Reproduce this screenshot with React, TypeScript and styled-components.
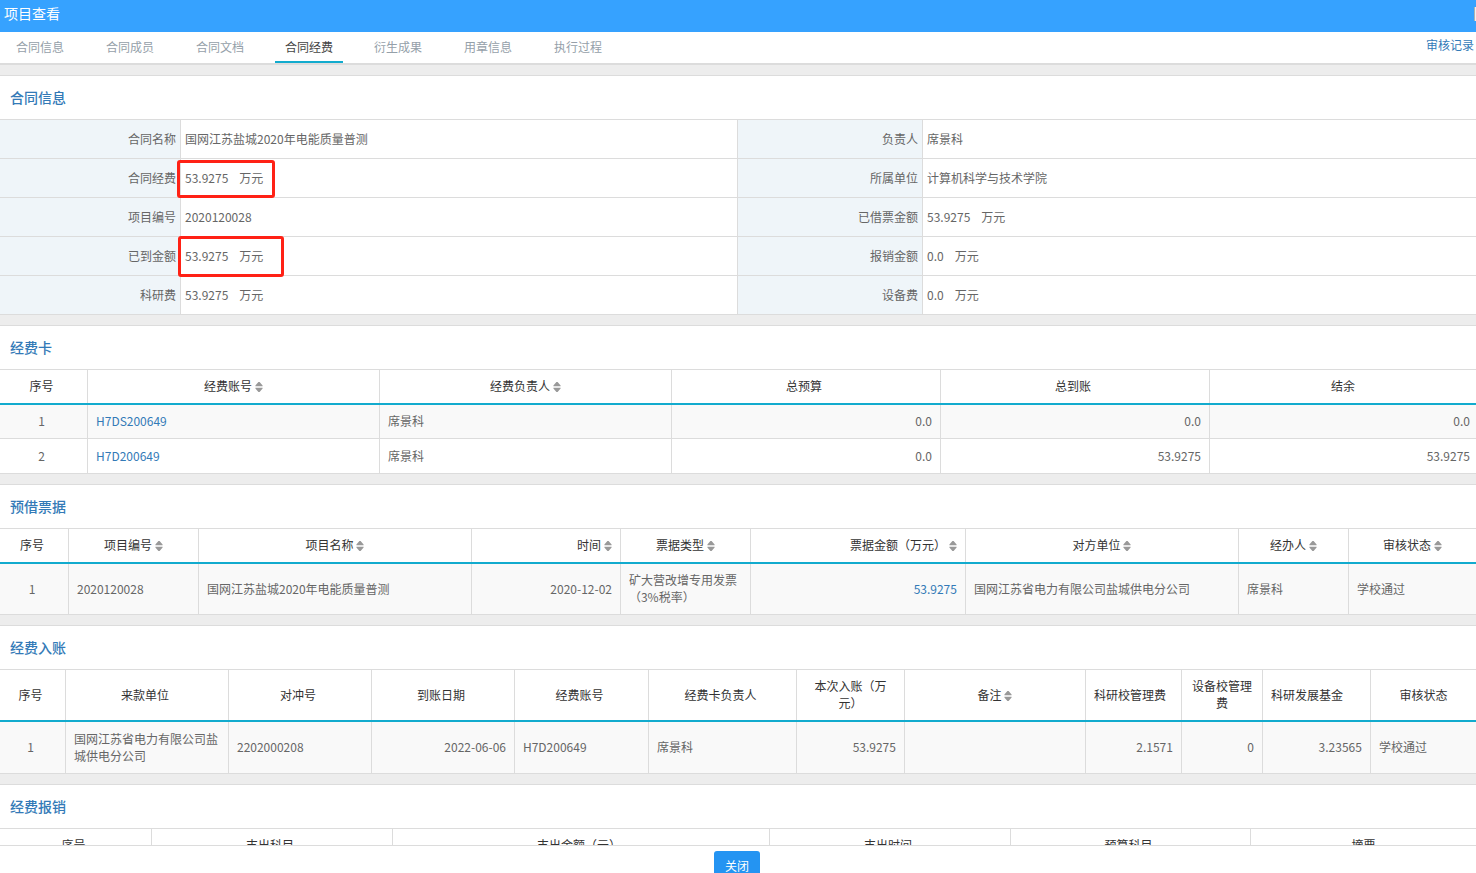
import React from "react";
import styled, { createGlobalStyle, css } from "styled-components";

const LINE = "#dcdcdc";
const LINK = "#337ab7";
const TEAL = "#12abce";

const GlobalStyle = createGlobalStyle`
  * { box-sizing: border-box; }
  body {
    margin: 0;
    background: #fff;
    color: #666;
    font-family: "Noto Sans CJK SC", "Noto Sans", sans-serif;
    font-size: 12px;
    line-height: 17px;
  }
  a { color: ${LINK}; text-decoration: none; }
`;

const Page = styled.div`
  display: flex;
  flex-direction: column;
  height: 100vh;
  overflow: hidden;
`;

const TitleBar = styled.header`
  flex: none;
  display: flex;
  justify-content: space-between;
  align-items: flex-start;
  height: 32px;
  padding: 3px 0 0 4px;
  background: #36a2ff;
  color: #fff;
  overflow: hidden;
`;

const PageTitle = styled.h1`
  margin: 0;
  font-size: 14px;
  font-weight: 400;
  line-height: 20px;
`;

const EdgeButton = styled.button`
  width: 2px;
  height: 14px;
  margin-top: 4px;
  padding: 0;
  border: 0;
  border-left: 1px solid #b0b0b0;
  background: #f0f0f0;
`;

const TabBar = styled.nav`
  flex: none;
  display: flex;
  justify-content: space-between;
  height: 33px;
  border-bottom: 2px solid ${LINE};
  padding: 0 2px 0 6px;
`;

const TabList = styled.div`
  display: flex;
  gap: 22px;
`;

const Tab = styled.a<{ $active?: boolean }>`
  height: 31px;
  padding: 6px 10px 0;
  && { color: #95a0a9; }
  ${(p) =>
    p.$active &&
    css`
      margin: 0 -1px;
      border-bottom: 2px solid ${TEAL};
      && { color: #444; }
    `}
`;

const RecordLink = styled.a`
  padding-top: 4px;
`;

const Content = styled.main`
  flex: 1;
  min-height: 0;
  display: flex;
  flex-direction: column;
  gap: 10px;
  padding-top: 10px;
  background: #ededed;
  overflow: hidden;
`;

const Panel = styled.section`
  flex: none;
  border-top: 1px solid ${LINE};
  background: #fff;
`;

const PanelTitle = styled.h2`
  height: 43px;
  margin: 0;
  padding: 0 10px;
  color: ${LINK};
  font-size: 14px;
  font-weight: 500;
  line-height: 43px;
`;

const Table = styled.table`
  width: 100%;
  table-layout: fixed;
  border-collapse: separate;
  border-spacing: 0;
  border-top: 1px solid ${LINE};
`;

const Col = styled.col<{ $share: number }>`
  width: ${(p) => p.$share}%;
`;

const InfoLabel = styled.th`
  height: 39px;
  padding: 0 4px 2px;
  border-right: 1px solid ${LINE};
  border-bottom: 1px solid ${LINE};
  background: #eff5f9;
  font-weight: 400;
  text-align: right;
`;

const InfoValue = styled.td`
  position: relative;
  padding: 0 4px 2px;
  border-bottom: 1px solid ${LINE};
  &:not(:last-child) { border-right: 1px solid ${LINE}; }
`;

const Unit = styled.span`
  margin-left: 11px;
`;

const Mark = styled.span<{ $left: number; $top: number; $width: number; $height: number }>`
  position: absolute;
  z-index: 1;
  left: ${(p) => p.$left}px;
  top: ${(p) => p.$top}px;
  width: ${(p) => p.$width}px;
  height: ${(p) => p.$height}px;
  border: 3px solid #ff2115;
  border-radius: 3px;
  pointer-events: none;
`;

type Align = "left" | "center" | "right";

const HeadCell = styled.th<{ $align?: Align; $tight?: boolean }>`
  padding: 7px ${(p) => (p.$tight ? 9 : 13)}px 9px 8px;
  border-bottom: 2px solid ${TEAL};
  color: #333;
  font-weight: 400;
  text-align: ${(p) => p.$align ?? "center"};
  background-image: linear-gradient(${LINE}, ${LINE});
  background-repeat: no-repeat;
  background-position: right top;
  background-size: 1px 100%;
  &:last-child {
    padding-right: 8px;
    background-image: none;
  }
`;

const BodyRow = styled.tr<{ $height: number }>`
  height: ${(p) => p.$height}px;
  &:nth-child(odd) { background: #f9f9f9; }
`;

const Cell = styled.td<{ $align?: Align }>`
  padding: 7px 8px 9px;
  border-right: 1px solid ${LINE};
  border-bottom: 1px solid ${LINE};
  text-align: ${(p) => p.$align ?? "left"};
  &:first-child { padding-right: 12px; text-align: center; }
  &:last-child { border-right: 0; padding-right: 6px; }
`;

const SortSvg = styled.svg`
  margin-left: 3px;
  vertical-align: -1px;
`;

const Footer = styled.footer`
  flex: none;
  display: flex;
  justify-content: center;
  align-items: flex-start;
  height: 28px;
  padding: 5px 2px 0 0;
  border-top: 1px solid ${LINE};
  background: #fff;
  overflow: hidden;
`;

const CloseButton = styled.button`
  flex: none;
  height: 30px;
  padding: 0 11px 2px;
  border: 0;
  border-radius: 3px;
  background: #2494f2;
  color: #fff;
  font: inherit;
`;

const SortIcon = () => (
  <SortSvg width="8" height="10" viewBox="0 0 8 10" fill="#999" aria-hidden="true">
    <path d="M3.4 0 H4.6 L7.6 3.4 V4.2 H0.4 V3.4 Z M0.4 5.8 H7.6 V6.6 L4.6 10 H3.4 L0.4 6.6 Z" />
  </SortSvg>
);

interface Column {
  title: React.ReactNode;
  width: number;
  align?: Align;
  headAlign?: Align;
  sort?: boolean;
  wraps?: boolean;
}

interface Row {
  height: number;
  cells: React.ReactNode[];
}

const Cols = ({ widths }: { widths: number[] }) => {
  const total = widths.reduce((a, b) => a + b, 0);
  return (
    <colgroup>
      {widths.map((w, i) => (
        <Col key={i} $share={(w / total) * 100} />
      ))}
    </colgroup>
  );
};

const DataPanel = ({ title, columns, rows }: { title: string; columns: Column[]; rows: Row[] }) => (
  <Panel>
    <PanelTitle>{title}</PanelTitle>
    <Table>
      <Cols widths={columns.map((c) => c.width)} />
      <thead>
        <tr>
          {columns.map((c, i) => (
            <HeadCell key={i} scope="col" $align={c.headAlign} $tight={c.sort || c.wraps}>
              {c.title}
              {c.sort && <SortIcon />}
            </HeadCell>
          ))}
        </tr>
      </thead>
      <tbody>
        {rows.map((r, i) => (
          <BodyRow key={i} $height={r.height}>
            {r.cells.map((cell, j) => (
              <Cell key={j} $align={columns[j].align}>
                {cell}
              </Cell>
            ))}
          </BodyRow>
        ))}
      </tbody>
    </Table>
  </Panel>
);

const Money = ({ value }: { value: string }) => (
  <>
    {value}
    <Unit>万元</Unit>
  </>
);

const tabs = ["合同信息", "合同成员", "合同文档", "合同经费", "衍生成果", "用章信息", "执行过程"];

const info: [string, React.ReactNode, string, React.ReactNode][] = [
  ["合同名称", "国网江苏盐城2020年电能质量普测", "负责人", "席景科"],
  [
    "合同经费",
    <>
      <Money value="53.9275" />
      <Mark $left={-4} $top={1} $width={98} $height={38} />
    </>,
    "所属单位",
    "计算机科学与技术学院",
  ],
  ["项目编号", "2020120028", "已借票金额", <Money value="53.9275" />],
  [
    "已到金额",
    <>
      <Money value="53.9275" />
      <Mark $left={-3} $top={-1} $width={106} $height={41} />
    </>,
    "报销金额",
    <Money value="0.0" />,
  ],
  ["科研费", <Money value="53.9275" />, "设备费", <Money value="0.0" />],
];

const cardColumns: Column[] = [
  { title: "序号", width: 88 },
  { title: "经费账号", width: 292, sort: true },
  { title: "经费负责人", width: 292, sort: true },
  { title: "总预算", width: 269, align: "right" },
  { title: "总到账", width: 269, align: "right" },
  { title: "结余", width: 266, align: "right" },
];

const cardRows: Row[] = [
  { height: 34, cells: ["1", <a href="#H7DS200649">H7DS200649</a>, "席景科", "0.0", "0.0", "0.0"] },
  { height: 35, cells: ["2", <a href="#H7D200649">H7D200649</a>, "席景科", "0.0", "53.9275", "53.9275"] },
];

const billColumns: Column[] = [
  { title: "序号", width: 69 },
  { title: "项目编号", width: 130, sort: true },
  { title: "项目名称", width: 273, sort: true },
  { title: "时间", width: 149, sort: true, align: "right", headAlign: "right" },
  { title: "票据类型", width: 130, sort: true },
  { title: "票据金额（万元）", width: 215, sort: true, align: "right", headAlign: "right" },
  { title: "对方单位", width: 273, sort: true },
  { title: "经办人", width: 110, sort: true },
  { title: "审核状态", width: 127, sort: true },
];

const billRows: Row[] = [
  {
    height: 51,
    cells: [
      "1",
      "2020120028",
      "国网江苏盐城2020年电能质量普测",
      "2020-12-02",
      <>
        矿大营改增专用发票
        <br />
        （3%税率）
      </>,
      <a href="#bill">53.9275</a>,
      "国网江苏省电力有限公司盐城供电分公司",
      "席景科",
      "学校通过",
    ],
  },
];

const incomeColumns: Column[] = [
  { title: "序号", width: 66 },
  { title: "来款单位", width: 163 },
  { title: "对冲号", width: 143 },
  { title: "到账日期", width: 143, align: "right" },
  { title: "经费账号", width: 134 },
  { title: "经费卡负责人", width: 148 },
  {
    title: (
      <>
        本次入账（万
        <br />
        元）
      </>
    ),
    width: 108,
    align: "right",
    wraps: true,
  },
  { title: "备注", width: 181, sort: true },
  { title: "科研校管理费", width: 96, align: "right", headAlign: "left" },
  { title: "设备校管理费", width: 81, align: "right", wraps: true },
  { title: "科研发展基金", width: 108, align: "right", headAlign: "left" },
  { title: "审核状态", width: 105 },
];

const incomeRows: Row[] = [
  {
    height: 52,
    cells: [
      "1",
      "国网江苏省电力有限公司盐城供电分公司",
      "2202000208",
      "2022-06-06",
      "H7D200649",
      "席景科",
      "53.9275",
      "",
      "2.1571",
      "0",
      "3.23565",
      "学校通过",
    ],
  },
];

const expenseColumns: Column[] = [
  { title: "序号", width: 152 },
  { title: "支出科目", width: 241 },
  { title: "支出金额（元）", width: 377 },
  { title: "支出时间", width: 241 },
  { title: "预算科目", width: 240 },
  { title: "摘要", width: 225 },
];

export default function App() {
  return (
    <Page>
      <GlobalStyle />
      <TitleBar>
        <PageTitle>项目查看</PageTitle>
        <EdgeButton type="button" aria-label="关闭窗口" />
      </TitleBar>
      <TabBar>
        <TabList>
          {tabs.map((name) => (
            <Tab key={name} href={`#${name}`} $active={name === "合同经费"}>
              {name}
            </Tab>
          ))}
        </TabList>
        <RecordLink href="#records">审核记录</RecordLink>
      </TabBar>
      <Content>
        <Panel>
          <PanelTitle>合同信息</PanelTitle>
          <Table>
            <Cols widths={[181, 557, 185, 553]} />
            <tbody>
              {info.map(([l1, v1, l2, v2]) => (
                <tr key={l1}>
                  <InfoLabel scope="row">{l1}</InfoLabel>
                  <InfoValue>{v1}</InfoValue>
                  <InfoLabel scope="row">{l2}</InfoLabel>
                  <InfoValue>{v2}</InfoValue>
                </tr>
              ))}
            </tbody>
          </Table>
        </Panel>
        <DataPanel title="经费卡" columns={cardColumns} rows={cardRows} />
        <DataPanel title="预借票据" columns={billColumns} rows={billRows} />
        <DataPanel title="经费入账" columns={incomeColumns} rows={incomeRows} />
        <DataPanel title="经费报销" columns={expenseColumns} rows={[]} />
      </Content>
      <Footer>
        <CloseButton type="button">关闭</CloseButton>
      </Footer>
    </Page>
  );
}
